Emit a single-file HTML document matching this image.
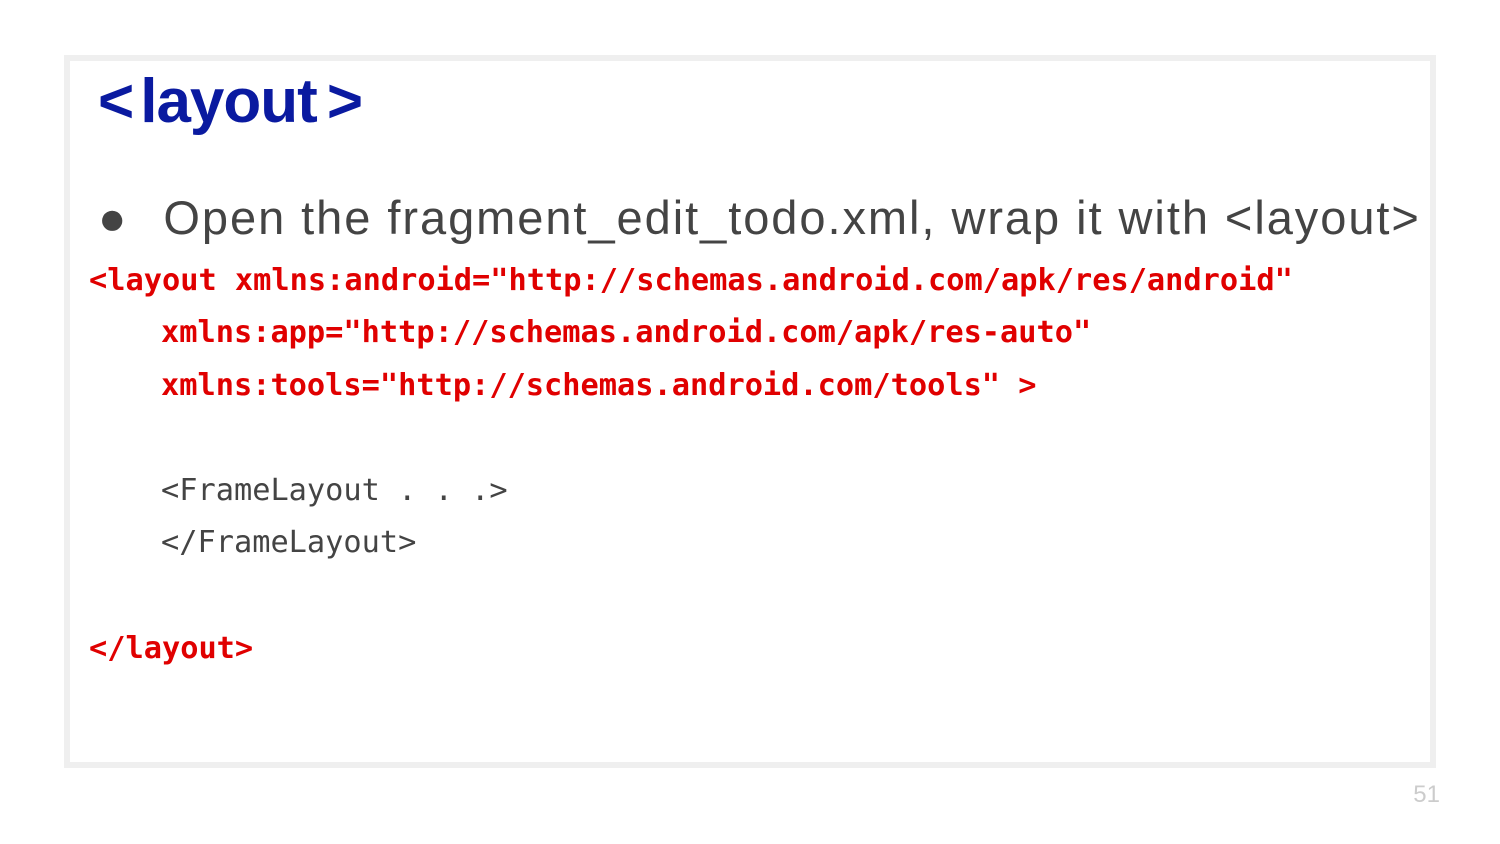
<!DOCTYPE html>
<html><head><meta charset="utf-8"><style>
html,body{margin:0;padding:0;background:#fff;}
body{width:1500px;height:844px;position:relative;overflow:hidden;font-family:"Liberation Sans",sans-serif;}
.frame{position:absolute;left:64px;top:55px;width:1360px;height:701px;border:6px solid #efefef;}
.t{position:absolute;white-space:pre;}
.title{left:98px;top:66px;font-size:62px;font-weight:bold;color:#0a1aa0;letter-spacing:-1px;}
.bul{left:98px;top:190px;font-size:47px;color:#444;letter-spacing:1.95px;}
.code{font-family:"DejaVu Sans Mono","Liberation Mono",monospace;font-size:30.3px;}
.r{color:#e00000;font-weight:bold;}
.g{color:#444;}
.num{right:60px;top:781px;font-size:24px;color:#ccc;}
</style></head><body>
<div class="frame"></div>
<div class="t title">&lt;<span style="margin:0 10px 0 7px">layout</span>&gt;</div>
<div class="t bul"><span style="letter-spacing:0">●</span><span style="display:inline-block;width:37px"></span>Open the fragment_edit_todo.xml, wrap it with &lt;layout&gt;</div>
<div class="t code r" style="left:89px;top:263px">&lt;layout xmlns:android="http://schemas.android.com/apk/res/android"</div>
<div class="t code r" style="left:161px;top:315px">xmlns:app="http://schemas.android.com/apk/res-auto"</div>
<div class="t code r" style="left:161px;top:368px">xmlns:tools="http://schemas.android.com/tools" &gt;</div>
<div class="t code g" style="left:161px;top:473px">&lt;FrameLayout . . .&gt;</div>
<div class="t code g" style="left:161px;top:525px">&lt;/FrameLayout&gt;</div>
<div class="t code r" style="left:89px;top:631px">&lt;/layout&gt;</div>
<div class="t num">51</div>
</body></html>
